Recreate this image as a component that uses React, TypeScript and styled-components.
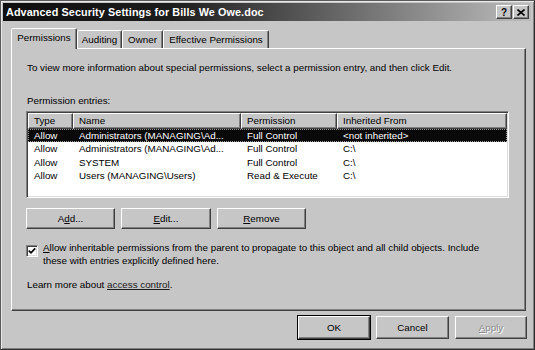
import React from "react";
import styled, { createGlobalStyle, css } from "styled-components";

const GlobalStyle = createGlobalStyle`
  html, body {
    margin: 0;
    padding: 0;
    background: #c6c6c6;
  }
  body {
    font-family: "Liberation Sans", Arial, sans-serif;
    font-size: 9.8px;
    color: #000;
  }
`;

const FACE = "#c6c6c6";

const raised = css`
  border-style: solid;
  border-width: 1px;
  border-color: #fff #404040 #404040 #fff;
  box-shadow: inset -1px -1px 0 #808080;
`;

const sunken = css`
  border-style: solid;
  border-width: 1px;
  border-color: #808080 #fff #fff #808080;
  box-shadow: inset 1px 1px 0 #404040, inset -1px -1px 0 #dcdcdc;
`;

const Window = styled.div`
  width: 535px;
  height: 350px;
  box-sizing: border-box;
  background: ${FACE};
  border: 1px solid;
  border-color: #5a5a5a #303030 #303030 #5a5a5a;
  box-shadow: inset 1px 1px 0 #e8e8e8, inset -1px -1px 0 #808080;
  padding: 2px 3px 2px 2px;
  display: flex;
  flex-direction: column;
`;

const TitleBar = styled.div`
  height: 18px;
  display: flex;
  align-items: center;
  justify-content: space-between;
  padding: 0 2px 0 3px;
  background: linear-gradient(to right, #0e0e0e 0%, #1c1c1c 32%, #bdbdbd 100%);
`;

const Title = styled.span`
  color: #fff;
  font-weight: bold;
  font-size: 10.8px;
  letter-spacing: 0.1px;
`;

const TitleButtons = styled.div`
  display: flex;
  gap: 1px;
`;

const TitleButton = styled.div`
  ${raised};
  width: 14px;
  height: 12px;
  background: ${FACE};
  display: flex;
  align-items: center;
  justify-content: center;
  font-weight: bold;
  font-size: 10px;
  color: #000;
`;

const Body = styled.div`
  flex: 1;
  display: flex;
  flex-direction: column;
  padding: 7px 3px 0 8px;
`;

const TabStrip = styled.div`
  height: 20px;
  display: flex;
  align-items: flex-end;
  position: relative;
  z-index: 1;
`;

const Tab = styled.div<{ $active?: boolean; $width: number }>`
  box-sizing: border-box;
  width: ${({ $width }) => $width}px;
  height: ${({ $active }) => ($active ? 21 : 18)}px;
  margin-bottom: ${({ $active }) => ($active ? -1 : 0)}px;
  background: ${FACE};
  border-style: solid;
  border-width: 1px 1px 0 1px;
  border-color: #fff #404040 transparent #fff;
  box-shadow: inset -1px 0 0 #808080;
  border-radius: 2px 2px 0 0;
  display: flex;
  align-items: center;
  justify-content: center;
  padding-bottom: ${({ $active }) => ($active ? 3 : 1)}px;
`;

const Panel = styled.div`
  ${raised};
  width: 515px;
  height: 263px;
  box-sizing: border-box;
  background: ${FACE};
  display: flex;
  flex-direction: column;
  padding: 13px 0 0 14px;
`;

const Text = styled.div<{ $mt?: number; $ml?: number }>`
  line-height: 12px;
  margin-top: ${({ $mt }) => $mt ?? 0}px;
  margin-left: ${({ $ml }) => $ml ?? 0}px;
  white-space: nowrap;
`;

const ListBox = styled.div`
  ${sunken};
  margin-top: 4px;
  width: 483px;
  height: 87px;
  box-sizing: border-box;
  background: #fff;
  padding: 1px;
`;

const Row = styled.div<{ $selected?: boolean }>`
  display: grid;
  grid-template-columns: 45px 168px 96px 1fr;
  height: 13.4px;
  line-height: 13.4px;
  box-sizing: border-box;
  background: ${({ $selected }) => ($selected ? "#0a0a0a" : "transparent")};
  color: ${({ $selected }) => ($selected ? "#fff" : "#000")};
  outline: ${({ $selected }) => ($selected ? "1px dotted #9a9a9a" : "none")};
  outline-offset: -1px;
`;

const HeaderRow = styled.div`
  display: grid;
  grid-template-columns: 45px 168px 96px 1fr;
  height: 16px;
`;

const HeaderCell = styled.div`
  ${raised};
  background: ${FACE};
  padding-left: 5px;
  line-height: 14px;
  white-space: nowrap;
  overflow: hidden;
`;

const Cell = styled.div`
  padding-left: 6px;
  white-space: nowrap;
  overflow: hidden;
`;

const ButtonRow = styled.div<{ $end?: boolean }>`
  display: flex;
  gap: 6px;
  justify-content: ${({ $end }) => ($end ? "flex-end" : "flex-start")};
`;

const ActionRow = styled(ButtonRow)`
  margin-top: 10px;
`;

const Button = styled.button<{
  $width: number;
  $height?: number;
  $default?: boolean;
  $disabled?: boolean;
}>`
  ${raised};
  width: ${({ $width }) => $width}px;
  height: ${({ $height }) => $height ?? 21}px;
  background: ${FACE};
  font-family: inherit;
  font-size: 9.8px;
  padding: 0;
  color: ${({ $disabled }) => ($disabled ? "#8a8a8a" : "#000")};
  text-shadow: ${({ $disabled }) => ($disabled ? "1px 1px 0 #fff" : "none")};
  ${({ $default }) =>
    $default &&
    css`
      outline: 1px solid #000;
      outline-offset: 0;
      margin-left: 1px;
    `}
`;

const Key = styled.span`
  text-decoration: underline;
`;

const CheckRow = styled.div`
  display: flex;
  gap: 5px;
  margin-top: 13px;
`;

const CheckBox = styled.div`
  ${sunken};
  width: 12px;
  height: 12px;
  box-sizing: border-box;
  background: #fff;
  margin-top: 3px;
  display: flex;
  align-items: center;
  justify-content: center;
`;

const CheckLabel = styled.div`
  line-height: 12.5px;
  white-space: nowrap;
`;

const Link = styled.span`
  color: #1a1a1a;
  text-decoration: underline;
`;

const Footer = styled(ButtonRow)`
  margin-top: 5px;
  padding-right: 1px;
`;

const entries = [
  ["Allow", "Administrators (MANAGING\\Ad...", "Full Control", "<not inherited>"],
  ["Allow", "Administrators (MANAGING\\Ad...", "Full Control", "C:\\"],
  ["Allow", "SYSTEM", "Full Control", "C:\\"],
  ["Allow", "Users (MANAGING\\Users)", "Read & Execute", "C:\\"],
];

const tabs = [
  { label: "Permissions", width: 66, active: true },
  { label: "Auditing", width: 45 },
  { label: "Owner", width: 41 },
  { label: "Effective Permissions", width: 106 },
];

export default function App() {
  return (
    <>
      <GlobalStyle />
      <Window>
        <TitleBar>
          <Title>Advanced Security Settings for Bills We Owe.doc</Title>
          <TitleButtons>
            <TitleButton>?</TitleButton>
            <TitleButton>
              <svg width="8" height="7" viewBox="0 0 8 7">
                <path d="M0.5 0.5 L7.5 6.5 M7.5 0.5 L0.5 6.5" stroke="#000" strokeWidth="1.6" />
              </svg>
            </TitleButton>
          </TitleButtons>
        </TitleBar>
        <Body>
          <TabStrip>
            {tabs.map((t) => (
              <Tab key={t.label} $width={t.width} $active={t.active}>
                {t.label}
              </Tab>
            ))}
          </TabStrip>
          <Panel>
            <Text $ml={1}>
              To view more information about special permissions, select a permission entry, and then click Edit.
            </Text>
            <Text $mt={21} $ml={1}>
              Permission entries:
            </Text>
            <ListBox>
              <HeaderRow>
                <HeaderCell>Type</HeaderCell>
                <HeaderCell>Name</HeaderCell>
                <HeaderCell>Permission</HeaderCell>
                <HeaderCell>Inherited From</HeaderCell>
              </HeaderRow>
              {entries.map((e, i) => (
                <Row key={i} $selected={i === 0}>
                  {e.map((c, j) => (
                    <Cell key={j}>{c}</Cell>
                  ))}
                </Row>
              ))}
            </ListBox>
            <ActionRow>
              <Button $width={89}>
                A<Key>d</Key>d...
              </Button>
              <Button $width={90}>
                <Key>E</Key>dit...
              </Button>
              <Button $width={89}>
                <Key>R</Key>emove
              </Button>
            </ActionRow>
            <CheckRow>
              <CheckBox>
                <svg width="8" height="8" viewBox="0 0 8 8">
                  <path d="M0.8 3.6 L3 5.8 L7.2 1.4" stroke="#000" strokeWidth="1.7" fill="none" />
                </svg>
              </CheckBox>
              <CheckLabel>
                <Key>A</Key>llow inheritable permissions from the parent to propagate to this object and all child
                objects. Include
                <br />
                these with entries explicitly defined here.
              </CheckLabel>
            </CheckRow>
            <Text $mt={12} $ml={1}>
              Learn more about <Link>access control</Link>.
            </Text>
          </Panel>
          <Footer $end>
            <Button $width={72} $height={23} $default>
              OK
            </Button>
            <Button $width={73} $height={23}>
              Cancel
            </Button>
            <Button $width={72} $height={23} $disabled>
              <Key>A</Key>pply
            </Button>
          </Footer>
        </Body>
      </Window>
    </>
  );
}
